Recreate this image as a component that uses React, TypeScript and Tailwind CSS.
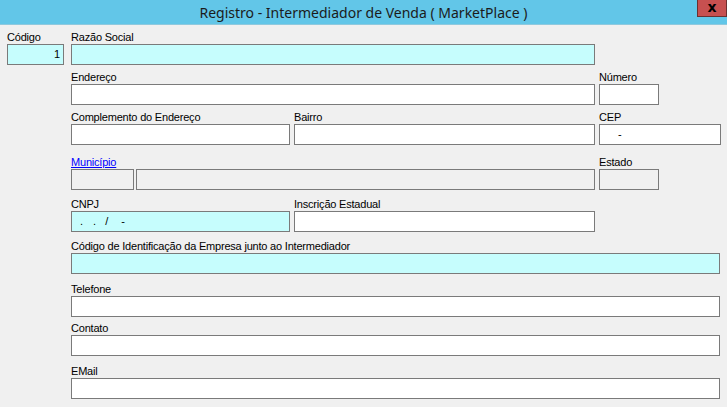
import React from 'react';

const font = { fontFamily: '"Liberation Sans", Arial, sans-serif' };

function Box({
  className = '',
  cyan = false,
  gray = false,
  children,
}: {
  className?: string;
  cyan?: boolean;
  gray?: boolean;
  children?: React.ReactNode;
}) {
  const bg = cyan ? 'bg-[#c6fdfd]' : gray ? 'bg-[#f0f0f0]' : 'bg-white';
  return (
    <div className={`h-[21px] border border-[#7a7a7a] ${bg} flex items-center text-[11px] text-black ${className}`}>
      {children}
    </div>
  );
}

function Label({ children, link = false }: { children: React.ReactNode; link?: boolean }) {
  return (
    <div
      className={`h-[13px] leading-[13px] text-[11px] tracking-[-0.2px] whitespace-nowrap ${
        link ? 'text-[#0000ff] underline' : 'text-black'
      }`}
    >
      {children}
    </div>
  );
}

export default function App() {
  return (
    <div className="w-[727px] h-[407px] bg-[#f0f0f0] overflow-hidden" style={font}>
      {/* title bar */}
      <div className="relative h-[25px] bg-[#62c6e8] border-b border-[#8fc9de] flex items-center justify-center">
        <span className="text-[14px] text-[#1b1b1b]" style={{ fontFamily: '"Noto Sans", "Open Sans", sans-serif' }}>
          Registro - Intermediador de Venda ( MarketPlace )
        </span>
        <div className="absolute right-0 top-0 w-[30px] h-[17px] bg-[#c75050] border border-[#6a3030] border-t-0 flex items-center justify-center">
          <span className="text-[14px] font-bold leading-none text-black -mt-[2px]" style={{ fontFamily: '"DejaVu Sans", sans-serif' }}>
            x
          </span>
        </div>
      </div>

      <div className="flex pt-[6px]">
        {/* Código */}
        <div className="w-[57px] ml-[7px]">
          <Label>Código</Label>
          <Box cyan className="justify-end pr-[3px]">
            1
          </Box>
        </div>

        <div className="ml-[7px] w-[650px] flex flex-col">
          <div className="w-[524px]">
            <Label>Razão Social</Label>
            <Box cyan />
          </div>

          <div className="flex mt-[6px] gap-[4px]">
            <div className="w-[524px]">
              <Label>Endereço</Label>
              <Box />
            </div>
            <div className="w-[60px]">
              <Label>Número</Label>
              <Box />
            </div>
          </div>

          <div className="flex mt-[6px] gap-[4px]">
            <div className="w-[219px]">
              <Label>Complemento do Endereço</Label>
              <Box />
            </div>
            <div className="w-[301px]">
              <Label>Bairro</Label>
              <Box />
            </div>
            <div className="w-[122px]">
              <Label>CEP</Label>
              <Box className="pl-[18px]">-</Box>
            </div>
          </div>

          <div className="flex mt-[11px] gap-[4px]">
            <div className="w-[524px]">
              <Label link>Município</Label>
              <div className="flex gap-[2px]">
                <Box gray className="w-[63px]" />
                <Box gray className="flex-1" />
              </div>
            </div>
            <div className="w-[60px]">
              <Label>Estado</Label>
              <Box gray />
            </div>
          </div>

          <div className="flex mt-[8px] gap-[4px]">
            <div className="w-[219px]">
              <Label>CNPJ</Label>
              <Box cyan className="pl-[8px]">
                <span>.</span>
                <span className="ml-[10px]">.</span>
                <span className="ml-[9px]">/</span>
                <span className="ml-[13px]">-</span>
              </Box>
            </div>
            <div className="w-[301px]">
              <Label>Inscrição Estadual</Label>
              <Box />
            </div>
          </div>

          <div className="mt-[8px] w-[649px]">
            <Label>Código de Identificação da Empresa junto ao Intermediador</Label>
            <Box cyan />
          </div>

          <div className="mt-[9px] w-[649px]">
            <Label>Telefone</Label>
            <Box />
          </div>

          <div className="mt-[5px] w-[649px]">
            <Label>Contato</Label>
            <Box />
          </div>

          <div className="mt-[9px] w-[649px]">
            <Label>EMail</Label>
            <Box />
          </div>
        </div>
      </div>
    </div>
  );
}
